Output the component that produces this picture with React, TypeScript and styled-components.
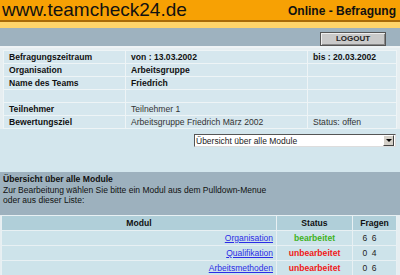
import React from "react";
import styled, { createGlobalStyle } from "styled-components";

const GlobalStyle = createGlobalStyle`
  html, body { margin: 0; padding: 0; }
  body {
    background: #e6eef1;
    font-family: "Liberation Sans", Arial, sans-serif;
    width: 400px;
    height: 275px;
    overflow: hidden;
  }
`;

const Page = styled.div`
  width: 400px;
  display: flex;
  flex-direction: column;
`;

const Header = styled.div`
  height: 20px;
  background: #f7a104;
  display: flex;
  align-items: center;
  justify-content: space-between;
  padding: 0 4px 0 2px;
  border-bottom: 2px solid #a86a08;
`;

const Logo = styled.div`
  font-size: 19px;
  line-height: 20px;
  color: #111;
`;

const Title = styled.div`
  font-size: 12px;
  font-weight: bold;
  color: #111;
  line-height: 14px;
  padding-top: 2px;
`;

const Stripe = styled.div`
  height: 6px;
  background: #ffd46a;
`;

const ToolBar = styled.div`
  height: 20px;
  background: #9eb2bf;
  display: flex;
  justify-content: flex-end;
  align-items: flex-start;
  padding: 4px 14px 0 0;
  box-sizing: border-box;
  border-bottom: 2px solid #eef3f5;
`;

const LogoutButton = styled.button`
  width: 66px;
  height: 14px;
  padding: 0;
  background: #c9c9c9;
  border: 1px solid #555;
  box-shadow: inset 1px 1px 0 #eee, inset -1px -1px 0 #888;
  font-family: "Liberation Sans", Arial, sans-serif;
  font-size: 8px;
  font-weight: bold;
  color: #222;
  line-height: 12px;
`;

const Content = styled.div`
  padding: 0 3px;
`;

const InfoTable = styled.table`
  width: 394px;
  margin-top: 2px;
  table-layout: fixed;
  border-collapse: separate;
  border-spacing: 1px;
  background: #eef4f6;
`;

const InfoCell = styled.td<{ $bold?: boolean }>`
  height: 12px;
  padding: 0 0 0 5px;
  background: #d6e7ee;
  font-size: 8.6px;
  line-height: 12px;
  font-weight: ${(p) => (p.$bold ? "bold" : "normal")};
  color: ${(p) => (p.$bold ? "#111" : "#333")};
  white-space: nowrap;
  overflow: hidden;
  vertical-align: middle;
`;

const SelectArea = styled.div`
  height: 43px;
  background: #d3e6ed;
  display: flex;
  justify-content: flex-end;
  align-items: flex-start;
  padding-top: 5px;
  box-sizing: border-box;
  margin: 0 -3px;
  padding-right: 4px;
`;

const FakeSelect = styled.div`
  width: 202px;
  height: 13px;
  box-sizing: border-box;
  background: #fff;
  border: 1px solid;
  border-color: #555 #ddd #ddd #555;
  display: flex;
  align-items: center;
  justify-content: space-between;
  font-size: 8.5px;
  color: #222;
  padding-left: 1px;
`;

const Arrow = styled.div`
  width: 9px;
  height: 9px;
  margin-right: 1px;
  background: #d4d0c8;
  border: 1px solid;
  border-color: #fff #444 #444 #fff;
  display: flex;
  align-items: center;
  justify-content: center;
  &::after {
    content: "";
    border-left: 3px solid transparent;
    border-right: 3px solid transparent;
    border-top: 3px solid #000;
  }
`;

const InfoSection = styled.div`
  background: #9db1be;
  margin: 0 -3px;
  padding: 2px 3px 9px;
  font-size: 8.5px;
  line-height: 10.5px;
  color: #111;
`;

const SectionTitle = styled.div`
  font-weight: bold;
  font-size: 8.6px;
`;

const ModuleTable = styled.table`
  width: 396px;
  margin: 0 -2px;
  table-layout: fixed;
  border-collapse: separate;
  border-spacing: 1px 1px;
  background: #e8f0f3;
`;

const HeadCell = styled.th<{ $w?: number }>`
  height: 14px;
  padding: 0;
  background: #b0cfd9;
  font-size: 8.6px;
  font-weight: bold;
  color: #111;
  text-align: center;
  ${(p) => (p.$w ? `width: ${p.$w}px;` : "")}
`;

const RowCell = styled.td<{ $align?: string }>`
  height: 14px;
  padding: 0 3px;
  background: #cde3ea;
  font-size: 8.5px;
  text-align: ${(p) => p.$align || "left"};
  white-space: nowrap;
`;

const ModuleLink = styled.a`
  color: #2b2be6;
  text-decoration: underline;
`;

const Status = styled.span<{ $done?: boolean }>`
  font-weight: bold;
  font-size: 8.6px;
  color: ${(p) => (p.$done ? "#3eb21e" : "#f01818")};
`;

const Count = styled.span`
  color: #222;
  padding-right: 10px;
  word-spacing: 2px;
`;

const infoRows: [string, string, boolean, string, boolean][] = [
  ["Befragungszeitraum", "von : 13.03.2002", true, "bis : 20.03.2002", true],
  ["Organisation", "Arbeitsgruppe", true, "", false],
  ["Name des Teams", "Friedrich", true, "", false],
  ["", "", false, "", false],
  ["Teilnehmer", "Teilnehmer 1", false, "", false],
  ["Bewertungsziel", "Arbeitsgruppe Friedrich März 2002", false, "Status: offen", false],
];

const modules = [
  { name: "Organisation", done: true, count: "6 6" },
  { name: "Qualifikation", done: false, count: "0 4" },
  { name: "Arbeitsmethoden", done: false, count: "0 6" },
];

export default function App() {
  return (
    <Page>
      <GlobalStyle />
      <Header>
        <Logo>www.teamcheck24.de</Logo>
        <Title>Online - Befragung</Title>
      </Header>
      <Stripe />
      <ToolBar>
        <LogoutButton>LOGOUT</LogoutButton>
      </ToolBar>
      <Content>
        <InfoTable>
          <colgroup>
            <col style={{ width: 121 }} />
            <col style={{ width: 181 }} />
            <col />
          </colgroup>
          <tbody>
            {infoRows.map((r, i) => (
              <tr key={i}>
                <InfoCell $bold>{r[0]}</InfoCell>
                <InfoCell $bold={r[2]}>{r[1]}</InfoCell>
                <InfoCell $bold={r[4]}>{r[3]}</InfoCell>
              </tr>
            ))}
          </tbody>
        </InfoTable>
        <SelectArea>
          <FakeSelect>
            <span>Übersicht über alle Module</span>
            <Arrow />
          </FakeSelect>
        </SelectArea>
        <InfoSection>
          <SectionTitle>Übersicht über alle Module</SectionTitle>
          <div>Zur Bearbeitung wählen Sie bitte ein Modul aus dem Pulldown-Menue</div>
          <div>oder aus dieser Liste:</div>
        </InfoSection>
        <ModuleTable>
          <thead>
            <tr>
              <HeadCell>Modul</HeadCell>
              <HeadCell $w={75}>Status</HeadCell>
              <HeadCell $w={43}>Fragen</HeadCell>
            </tr>
          </thead>
          <tbody>
            {modules.map((m) => (
              <tr key={m.name}>
                <RowCell $align="right">
                  <ModuleLink href="#">{m.name}</ModuleLink>
                </RowCell>
                <RowCell $align="center">
                  <Status $done={m.done}>{m.done ? "bearbeitet" : "unbearbeitet"}</Status>
                </RowCell>
                <RowCell $align="center">
                  <Count>{m.count}</Count>
                </RowCell>
              </tr>
            ))}
          </tbody>
        </ModuleTable>
      </Content>
    </Page>
  );
}
